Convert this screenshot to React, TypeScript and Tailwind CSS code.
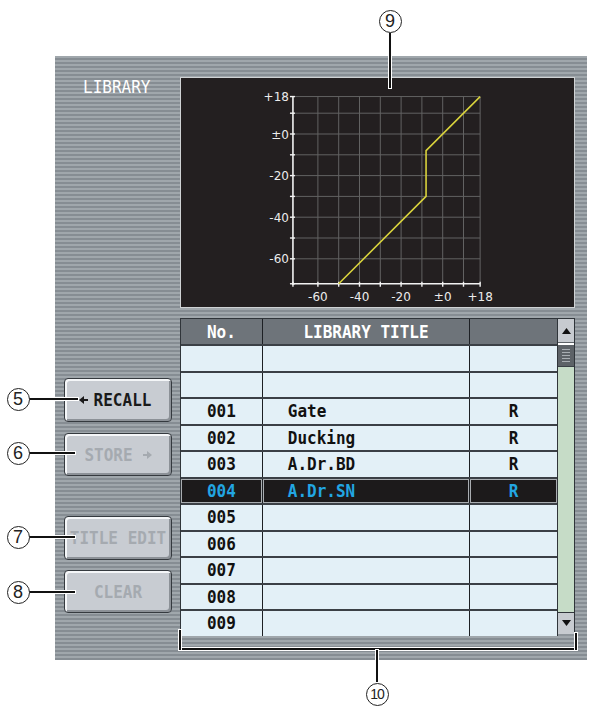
import React from 'react'

const MONO = "font-['DejaVu_Sans_Mono',monospace]"

interface Row {
  no: string
  title: string
  r: string
  selected?: boolean
}

const ROWS: Row[] = [
  { no: '', title: '', r: '' },
  { no: '', title: '', r: '' },
  { no: '001', title: 'Gate', r: 'R' },
  { no: '002', title: 'Ducking', r: 'R' },
  { no: '003', title: 'A.Dr.BD', r: 'R' },
  { no: '004', title: 'A.Dr.SN', r: 'R', selected: true },
  { no: '005', title: '', r: '' },
  { no: '006', title: '', r: '' },
  { no: '007', title: '', r: '' },
  { no: '008', title: '', r: '' },
  { no: '009', title: '', r: '' }
]

// dB -> svg coords inside the graph box
const gx = (db: number) => 261.7 + db * 2.08
const gy = (db: number) => 56 - db * 2.08

const GRID = [-60, -50, -40, -30, -20, -10, 0, 10]
const Y_LABELS: [number, string][] = [
  [18, '+18'],
  [0, '±0'],
  [-20, '-20'],
  [-40, '-40'],
  [-60, '-60']
]
const X_LABELS: [number, string][] = [
  [-60, '-60'],
  [-40, '-40'],
  [-20, '-20'],
  [0, '±0'],
  [18, '+18']
]
const CURVE: [number, number][] = [
  [-50, -72],
  [-8, -30],
  [-8, -8],
  [18, 18]
]

function Tall({ children }: { children: React.ReactNode }) {
  return <span className="inline-block scale-y-[1.15]">{children}</span>
}

function Graph() {
  const left = gx(-72)
  const right = gx(18)
  const top = gy(18)
  const bottom = gy(-72)
  const ticks = [...GRID, 18, -72]
  return (
    <div className="h-[231px] border border-[#cfd2d4] bg-[#231f20]">
      <svg width="393" height="229" viewBox="0 0 393 229">
        {GRID.map(d => (
          <line key={'v' + d} x1={gx(d)} x2={gx(d)} y1={top} y2={bottom} stroke="#626262" strokeWidth="1" />
        ))}
        {GRID.map(d => (
          <line key={'h' + d} x1={left} x2={right} y1={gy(d)} y2={gy(d)} stroke="#626262" strokeWidth="1" />
        ))}
        <line x1={right} x2={right} y1={top} y2={bottom} stroke="#626262" strokeWidth="1" />
        <line x1={left} x2={right} y1={top} y2={top} stroke="#626262" strokeWidth="1" />
        <line x1={left} x2={left} y1={top} y2={bottom + 1} stroke="#f2f2f2" strokeWidth="1.6" />
        <line x1={left - 1} x2={right} y1={bottom} y2={bottom} stroke="#f2f2f2" strokeWidth="1.6" />
        {ticks.map(d => (
          <line key={'ty' + d} x1={left - 3} x2={left + 2} y1={gy(d)} y2={gy(d)} stroke="#f2f2f2" strokeWidth="1.4" />
        ))}
        {ticks.map(d => (
          <line key={'tx' + d} x1={gx(d)} x2={gx(d)} y1={bottom - 2} y2={bottom + 3} stroke="#f2f2f2" strokeWidth="1.4" />
        ))}
        {Y_LABELS.map(([d, t]) => (
          <text key={'ly' + d} x={left - 4} y={gy(d) + 4.5} textAnchor="end" fill="#ececec" fontSize="12" fontFamily="DejaVu Sans, sans-serif">
            {t}
          </text>
        ))}
        {X_LABELS.map(([d, t]) => (
          <text key={'lx' + d} x={gx(d)} y={bottom + 17} textAnchor="middle" fill="#ececec" fontSize="12" fontFamily="DejaVu Sans, sans-serif">
            {t}
          </text>
        ))}
        <polyline
          points={CURVE.map(([x, y]) => `${gx(x)},${gy(y)}`).join(' ')}
          fill="none"
          stroke="#d8d23c"
          strokeWidth="1.6"
        />
      </svg>
    </div>
  )
}

function Cell({ w, children, align, selected, last }: { w: string; children?: React.ReactNode; align: 'center' | 'left'; selected?: boolean; last?: boolean }) {
  return (
    <div
      className={`${w} h-full flex items-center ${align === 'center' ? 'justify-center' : 'justify-start pl-[25px]'} ${
        last ? '' : 'border-r border-[#1d2024]'
      } ${selected ? 'bg-[#1c1a1b] text-[#22a6e2] shadow-[inset_0_0_0_1px_#a9adb1]' : 'text-[#111]'}`}
    >
      {children ? <Tall>{children}</Tall> : null}
    </div>
  )
}

function Table() {
  return (
    <div className={`mt-[10px] flex ${MONO} font-bold text-[16px] leading-none`}>
      <div className="w-[377px] flex flex-col border-l border-[#30353a]">
        <div className="h-[26px] flex bg-[#6e747a] text-white border-t border-[#30353a]">
          <div className="w-[82px] flex items-center justify-center border-r border-[#1d2024]"><Tall>No.</Tall></div>
          <div className="w-[208px] flex items-center justify-center border-r border-[#1d2024]"><Tall>LIBRARY TITLE</Tall></div>
          <div className="w-[87px]" />
        </div>
        {ROWS.map((r, i) => (
          <div key={i} className="h-[26.5px] flex bg-[#e3f0f7] border-t-2 border-[#3b4046]">
            <Cell w="w-[82px]" align="center" selected={r.selected}>{r.no}</Cell>
            <Cell w="w-[208px]" align="left" selected={r.selected}>{r.title}</Cell>
            <Cell w="w-[87px]" align="center" selected={r.selected} last>{r.r}</Cell>
          </div>
        ))}
      </div>
      <div className="w-[18px] flex flex-col border-x border-t border-[#30353a] bg-[#c6dcc7]">
        <div className="h-[24px] bg-[#c7cbd0] flex items-center justify-center border-b border-[#5d6267]">
          <svg width="9" height="6" viewBox="0 0 9 6"><path d="M4.5 0L9 6H0z" fill="#111" /></svg>
        </div>
        <div className="h-[2px] bg-white" />
        <div className="h-[22px] bg-[#5d6267] flex flex-col items-center justify-center gap-[2px] border-b border-[#3b4046]">
          {[0, 1, 2, 3, 4].map(k => (
            <div key={k} className="w-[8px] h-[1px] bg-[#a8adb2]" />
          ))}
        </div>
        <div className="flex-1" />
        <div className="h-[22px] bg-[#c7cbd0] flex items-center justify-center border-t border-[#30353a]">
          <svg width="9" height="6" viewBox="0 0 9 6"><path d="M0 0H9L4.5 6z" fill="#111" /></svg>
        </div>
        <div className="h-[2px] bg-[#8e959b]" />
      </div>
    </div>
  )
}

function PanelButton({ h, mt, active, children }: { h: string; mt: string; active?: boolean; children: React.ReactNode }) {
  return (
    <div
      className={`${h} ${mt} w-[108px] rounded-[4px] border border-[#353a3f] bg-[#c8ccd2] shadow-[inset_2px_2px_0_#f4f6f8,inset_-2px_-2px_0_#8c9197] flex items-center justify-center gap-[6px] ${MONO} font-bold text-[16px] ${
        active ? 'text-[#1a1a1a]' : 'text-[#a5aab0]'
      }`}
    >
      {children}
    </div>
  )
}

function Circled({ cx, cy, n }: { cx: number; cy: number; n: string }) {
  return (
    <div
      className="absolute w-[23px] h-[23px] rounded-full border border-[#222] bg-white flex items-center justify-center font-['Liberation_Sans',Arial,sans-serif] text-[#222] leading-none"
      style={{ left: cx - 11.5, top: cy - 11.5, fontSize: n.length > 1 ? 14 : 18, letterSpacing: n.length > 1 ? -1 : 0 }}
    >
      {n}
    </div>
  )
}

function HLine({ x1, x2, y }: { x1: number; x2: number; y: number }) {
  return <div className="absolute h-[2px] bg-[#111] shadow-[0_0_0_1px_#ffffff]" style={{ left: x1, top: y - 1, width: x2 - x1 }} />
}

function VLine({ x, y1, y2 }: { x: number; y1: number; y2: number }) {
  return <div className="absolute w-[2px] bg-[#111] shadow-[0_0_0_1px_#ffffff]" style={{ left: x - 1, top: y1, height: y2 - y1 }} />
}

export default function App() {
  return (
    <div className="relative w-[590px] h-[710px] bg-white overflow-hidden">
      <div className="ml-[55px] pt-[56px]">
        <div className="w-[532px] h-[604px] flex bg-[repeating-linear-gradient(to_bottom,#a0a7ac_0px,#a0a7ac_2px,#868d93_2px,#868d93_4px)]">
          <div className="w-[125px] flex flex-col">
            <div className={`h-[322px] pl-[28px] pt-[23px] text-white text-[16px] leading-none ${MONO}`}><Tall>LIBRARY</Tall></div>
            <div className="pl-[9px] flex flex-col">
              <PanelButton h="h-[44px]" mt="mt-0" active>
                <svg width="9" height="8" viewBox="0 0 9 8" className="ml-[-6px]"><path d="M0 4L5 0V3H9V5H5V8z" fill="#1a1a1a" /></svg>
                <Tall>RECALL</Tall>
              </PanelButton>
              <PanelButton h="h-[43px]" mt="mt-[11px]">
                <Tall>STORE</Tall>
                <svg width="9" height="8" viewBox="0 0 9 8" className="ml-[4px]"><path d="M9 4L4 0V3H0V5H4V8z" fill="#a5aab0" /></svg>
              </PanelButton>
              <PanelButton h="h-[44px]" mt="mt-[40px]"><Tall>TITLE EDIT</Tall></PanelButton>
              <PanelButton h="h-[43px]" mt="mt-[10px]"><Tall>CLEAR</Tall></PanelButton>
            </div>
          </div>
          <div className="w-[395px] pt-[21px] flex flex-col">
            <Graph />
            <Table />
          </div>
        </div>
      </div>

      {/* callouts */}
      <HLine x1={29} x2={78} y={399} />
      <HLine x1={29} x2={75} y={453} />
      <HLine x1={29} x2={75} y={537} />
      <HLine x1={29} x2={75} y={592} />
      <VLine x={390} y1={33} y2={88} />
      <HLine x1={179} x2={577} y={649} />
      <VLine x={180} y1={630} y2={650} />
      <VLine x={576} y1={633} y2={650} />
      <VLine x={377} y1={650} y2={682} />
      <Circled cx={18} cy={399} n="5" />
      <Circled cx={18} cy={453} n="6" />
      <Circled cx={18} cy={537} n="7" />
      <Circled cx={18} cy={592} n="8" />
      <Circled cx={390} cy={21} n="9" />
      <Circled cx={377} cy={694} n="10" />
    </div>
  )
}
